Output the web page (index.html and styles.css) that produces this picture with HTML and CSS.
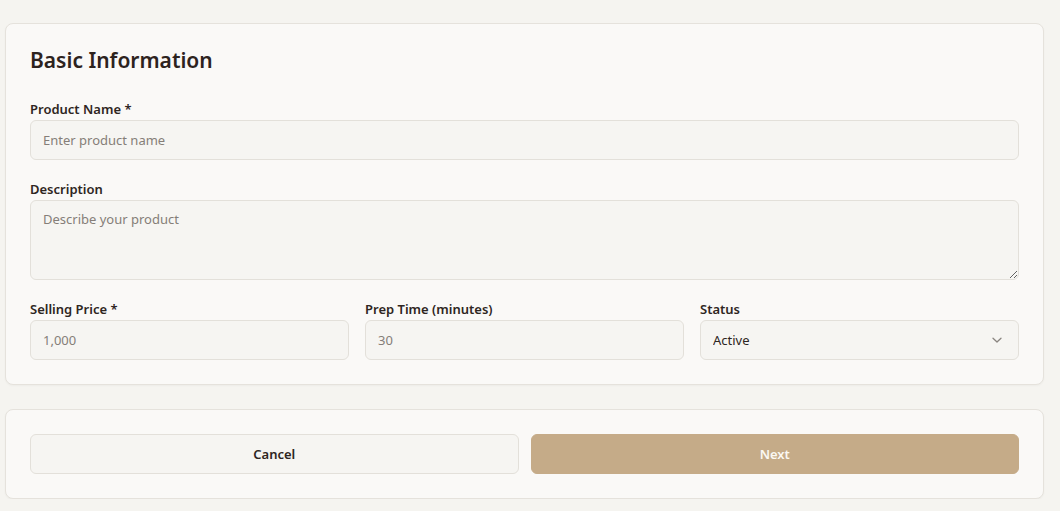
FILE: index.html
```
<!DOCTYPE html>
<html lang="en">
<head>
<meta charset="utf-8">
<title>Basic Information</title>
<link rel="stylesheet" href="styles.css">
</head>
<body>
<div class="page">
  <section class="card">
    <h2 class="title">Basic Information</h2>
    <div class="field">
      <label class="label">Product Name *</label>
      <input class="input" type="text" placeholder="Enter product name">
    </div>
    <div class="field">
      <label class="label">Description</label>
      <textarea class="input textarea" placeholder="Describe your product"></textarea>
    </div>
    <div class="row">
      <div class="field">
        <label class="label">Selling Price *</label>
        <input class="input" type="text" placeholder="1,000">
      </div>
      <div class="field">
        <label class="label">Prep Time (minutes)</label>
        <input class="input" type="text" placeholder="30">
      </div>
      <div class="field">
        <label class="label">Status</label>
        <div class="select-wrap">
          <select class="input select">
            <option>Active</option>
            <option>Inactive</option>
          </select>
          <svg class="chevron" width="12" height="12" viewBox="0 0 12 12" fill="none"><path d="M2 4.2 6 8l4-3.8" stroke="#8a8580" stroke-width="1.3" stroke-linecap="round" stroke-linejoin="round"/></svg>
        </div>
      </div>
    </div>
  </section>
  <section class="card actions">
    <button class="btn btn-cancel" type="button">Cancel</button>
    <button class="btn btn-next" type="button">Next</button>
  </section>
</div>
</body>
</html>
```
FILE: styles.css
```
* { box-sizing: border-box; }
html, body { margin: 0; padding: 0; }
body {
  background: #f5f4f0;
  font-family: "Noto Sans", "Open Sans", sans-serif;
  color: #2e2622;
}
.page {
  padding: 23px 16px 0 5px;
  display: flex;
  flex-direction: column;
  gap: 24px;
}
.card {
  background: #faf9f7;
  border: 1px solid #e5e2dc;
  border-radius: 8px;
  padding: 24px;
  box-shadow: 0 1px 2px rgba(60, 50, 40, 0.04);
}
.title {
  margin: 0 0 28px;
  font-size: 21px;
  line-height: 24px;
  font-weight: 600;
  color: #2d231e;
}
.field {
  display: flex;
  flex-direction: column;
  margin-bottom: 20px;
}
.row .field, .card > .row { margin-bottom: 0; }
.label {
  font-size: 13px;
  line-height: 18px;
  margin-bottom: 2px;
  font-weight: 600;
  color: #2e2622;
}
.input {
  display: block;
  width: 100%;
  height: 40px;
  margin: 0;
  padding: 0 12px;
  background: #f6f5f2;
  border: 1px solid #e3e0da;
  border-radius: 6px;
  font-family: inherit;
  font-size: 13px;
  color: #2e2622;
  outline: none;
}
.input::placeholder { color: #857e78; }
.textarea {
  height: 80px;
  padding: 9px 12px;
  resize: vertical;
  line-height: 18px;
}
.row {
  display: grid;
  grid-template-columns: repeat(3, 1fr);
  gap: 16px;
}
.select-wrap { position: relative; }
.select {
  appearance: none;
  -webkit-appearance: none;
  cursor: pointer;
}
.chevron {
  position: absolute;
  right: 16px;
  top: 14px;
  pointer-events: none;
}
.actions {
  display: flex;
  gap: 12px;
}
.btn {
  flex: 1;
  height: 40px;
  border-radius: 6px;
  font-family: inherit;
  font-size: 13px;
  font-weight: 600;
  cursor: pointer;
}
.btn-cancel {
  background: #f6f5f2;
  border: 1px solid #e3e0da;
  color: #2e2622;
}
.btn-next {
  background: #c5ab88;
  border: 1px solid #c5ab88;
  color: #fbf8f3;
}
```
